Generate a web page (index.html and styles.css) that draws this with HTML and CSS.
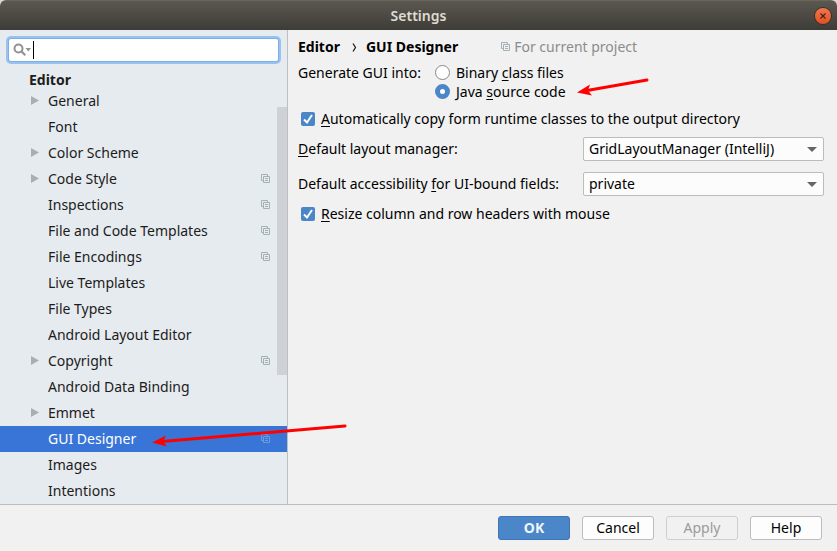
FILE: index.html
```html
<!DOCTYPE html>
<html lang="en">
<head>
<meta charset="utf-8">
<title>Settings</title>
<link rel="stylesheet" href="styles.css">
</head>
<body>
<svg class="defs" aria-hidden="true">
  <symbol id="copy" viewBox="0 0 9 10"><path d="M2 6.500H.5V.5h6V2M2.500 2.500h6v6h-6zM4 4.500h3M4 6.500h3" fill="none" stroke="currentColor"/></symbol>
  <symbol id="caret" viewBox="0 0 8 10"><path d="M0 0l8 4.500L0 9z" fill="#adadad"/></symbol>
</svg>
<div class="window">
  <header class="titlebar">
    <h1 class="title">Settings</h1>
    <button class="close" type="button" aria-label="Close"><svg viewBox="0 0 8 8"><path d="M1.500 1.500l5 5M6.500 1.500l-5 5" stroke="#4a241a" stroke-width="1.200"/></svg></button>
  </header>
  <div class="body">
    <aside class="sidebar">
      <label class="search">
        <svg class="search-icon" viewBox="0 0 18 14"><circle cx="5.500" cy="5.500" r="4" fill="none" stroke="#929292" stroke-width="2"/><path d="M8.300 8.300l4 4" stroke="#929292" stroke-width="2.200"/><path d="M12.500 5h5.500l-2.700 3.500z" fill="#929292"/></svg>
        <span class="cursor"></span>
        <input class="search-input" type="text" aria-label="Search settings">
      </label>
      <nav class="tree">
        <h2 class="group">Editor</h2>
        <ul class="items">
          <li class="item"><svg class="caret"><use href="#caret"/></svg><a class="link" href="#">General</a></li>
          <li class="item"><a class="link" href="#">Font</a></li>
          <li class="item"><svg class="caret"><use href="#caret"/></svg><a class="link" href="#">Color Scheme</a></li>
          <li class="item"><svg class="caret"><use href="#caret"/></svg><a class="link" href="#">Code Style</a><svg class="copy"><use href="#copy"/></svg></li>
          <li class="item"><a class="link" href="#">Inspections</a><svg class="copy"><use href="#copy"/></svg></li>
          <li class="item"><a class="link" href="#">File and Code Templates</a><svg class="copy"><use href="#copy"/></svg></li>
          <li class="item"><a class="link" href="#">File Encodings</a><svg class="copy"><use href="#copy"/></svg></li>
          <li class="item"><a class="link" href="#">Live Templates</a></li>
          <li class="item"><a class="link" href="#">File Types</a></li>
          <li class="item"><a class="link" href="#">Android Layout Editor</a></li>
          <li class="item"><svg class="caret"><use href="#caret"/></svg><a class="link" href="#">Copyright</a><svg class="copy"><use href="#copy"/></svg></li>
          <li class="item"><a class="link" href="#">Android Data Binding</a></li>
          <li class="item"><svg class="caret"><use href="#caret"/></svg><a class="link" href="#">Emmet</a></li>
          <li class="item selected"><a class="link" href="#">GUI Designer</a><svg class="copy"><use href="#copy"/></svg></li>
          <li class="item"><a class="link" href="#">Images</a></li>
          <li class="item"><a class="link" href="#">Intentions</a></li>
        </ul>
        <div class="scroll-thumb"></div>
      </nav>
    </aside>
    <main class="content">
      <div class="crumbs">
        <span>Editor</span><svg class="chevron" viewBox="0 0 5 9"><path d="M1 .5l2.500 4L1 8.500" fill="none" stroke="#222" stroke-width="1.300"/></svg><span>GUI Designer</span>
        <span class="scope"><svg class="copy"><use href="#copy"/></svg>For current project</span>
      </div>
      <div class="generate" role="radiogroup" aria-labelledby="generate-label">
        <span id="generate-label">Generate GUI into:</span>
        <div class="radios">
          <label class="choice"><input class="radio" type="radio" name="target"><span>Binary <u>c</u>lass files</span></label>
          <label class="choice"><input class="radio" type="radio" name="target" checked><span>Java <u>s</u>ource code</span></label>
        </div>
      </div>
      <label class="check-row"><span class="box"><input class="check" type="checkbox" checked><svg class="tick" viewBox="0 0 14 14"><path d="M3 7.500l3 3 5-7.500" fill="none" stroke="#fff" stroke-width="2"/></svg></span><span><u>A</u>utomatically copy form runtime classes to the output directory</span></label>
      <div class="fields">
        <label for="layout"><u>D</u>efault layout manager:</label>
        <div class="combo"><select class="select" id="layout"><option>GridLayoutManager (IntelliJ)</option></select></div>
        <label for="access">Default accessibility <u>f</u>or UI-bound fields:</label>
        <div class="combo"><select class="select" id="access"><option>private</option></select></div>
      </div>
      <label class="check-row"><span class="box"><input class="check" type="checkbox" checked><svg class="tick" viewBox="0 0 14 14"><path d="M3 7.500l3 3 5-7.500" fill="none" stroke="#fff" stroke-width="2"/></svg></span><span><u>R</u>esize column and row headers with mouse</span></label>
    </main>
  </div>
  <footer class="footer">
    <button class="btn primary" type="button">OK</button>
    <button class="btn" type="button">Cancel</button>
    <button class="btn" type="button" disabled>Apply</button>
    <button class="btn" type="button">Help</button>
  </footer>
  <svg class="arrow arrow-tree" viewBox="0 0 196 24" aria-hidden="true"><path d="M193 3L10 18.500" stroke="#f00" stroke-width="3" stroke-linecap="round"/><path d="M0 19.500L14 12.500 11 18.500 15 23.500z" fill="#f00"/></svg>
  <svg class="arrow arrow-radio" viewBox="0 0 74 20" aria-hidden="true"><path d="M70 3L10 13.500" stroke="#f00" stroke-width="3" stroke-linecap="round"/><path d="M0 15.500L13 7.500 11 13.500 15 18.500z" fill="#f00"/></svg>
</div>
</body>
</html>
```
FILE: styles.css
```css
* { box-sizing: border-box; }

body {
  margin: 0;
  background: #d8d8d8;
  color: #000;
  font: 14px/20px "Noto Sans", "Open Sans", sans-serif;
}

button, input, select { font: inherit; }
svg { flex: none; }
.defs { position: absolute; width: 0; height: 0; }

.window {
  position: relative;
  display: flex;
  flex-direction: column;
  min-height: 100vh;
  background: #f1f1f1;
  border-radius: 6px 6px 0 0;
  overflow: hidden;
}

.titlebar {
  display: grid;
  grid-template-columns: 1fr auto 1fr;
  align-items: center;
  height: 30px;
  padding: 0 6px;
  background: linear-gradient(#5b5850, #3e3c37);
  border-top: 1px solid #69665d;
}
.title {
  grid-column: 2;
  margin: 0;
  color: #dfdbd2;
  font-size: 14px;
  font-weight: 600;
}
.close {
  justify-self: end;
  display: grid;
  place-items: center;
  width: 16px;
  height: 16px;
  padding: 0;
  border: 0;
  border-radius: 50%;
  background: linear-gradient(#f2764f, #e2501f);
  box-shadow: 0 0 0 1px #33312c;
}
.close svg { width: 8px; height: 8px; }

.body { display: flex; flex: 1; }

.sidebar {
  display: flex;
  flex-direction: column;
  width: 288px;
  background: #e6ebef;
  border-right: 1px solid #bdbfc0;
}
.search {
  display: flex;
  align-items: center;
  height: 22px;
  margin: 9px 9px 8px;
  padding-left: 4px;
  background: #fff;
  border-radius: 2px;
  box-shadow: 0 0 0 1px #80aee0, 0 0 0 3px #97c3f3;
}
.search-icon { width: 18px; height: 14px; }
.cursor { width: 1px; height: 18px; margin-left: 2px; background: #000; }
.search-input {
  flex: 1;
  min-width: 0;
  padding: 0 4px;
  border: 0;
  outline: 0;
  background: none;
}

.tree { position: relative; color: #1c1c1c; }
.group {
  margin: 0;
  padding: 2px 0 0 29px;
  font-size: 14px;
  line-height: 17px;
  font-weight: 700;
}
.items { margin: 0; padding: 0; list-style: none; }
.item {
  display: grid;
  grid-template-columns: 17px 1fr 9px;
  align-items: center;
  height: 26px;
  padding: 0 17px 0 31px;
}
.link { grid-column: 2; color: inherit; text-decoration: none; }
.caret { grid-column: 1; grid-row: 1; width: 8px; height: 10px; }
.copy { width: 9px; height: 10px; color: #a5b0b6; }
.selected { background: #3875d7; color: #fff; }
.selected .copy { color: #6e9be0; }
.scroll-thumb {
  position: absolute;
  top: 38px;
  right: 0;
  width: 10px;
  height: 268px;
  background: #ced2d6;
}

.content { flex: 1; min-width: 0; padding: 7px 13px 0 10px; }
.crumbs {
  display: flex;
  align-items: center;
  font-weight: 700;
}
.chevron { width: 5px; height: 9px; margin: 0 9px 0 12px; }
.scope {
  display: flex;
  align-items: center;
  gap: 4px;
  margin-left: 43px;
  color: #8c8c8c;
  font-weight: 400;
}
.generate { display: flex; gap: 11px; margin-top: 6px; }
.generate > span { width: 126px; }
.choice { display: flex; align-items: center; gap: 6px; height: 19px; }
.radio {
  appearance: none;
  width: 15px;
  height: 15px;
  margin: 0;
  border: 1px solid #888;
  border-radius: 50%;
  background: #fff;
}
.radio:checked { border: 5px solid #4a86c8; }

.check-row { display: flex; align-items: center; gap: 6px; height: 20px; padding-left: 3px; margin-top: 8px; }
.box { display: grid; width: 14px; height: 14px; }
.check {
  appearance: none;
  grid-area: 1 / 1;
  width: 14px;
  height: 14px;
  margin: 0;
  border-radius: 2px;
  background: #4a86c8;
}
.tick { grid-area: 1 / 1; width: 14px; height: 14px; pointer-events: none; }
u { text-decoration-thickness: 1px; text-underline-offset: 2px; }

.fields {
  display: grid;
  grid-template-columns: 285px 1fr;
  row-gap: 11px;
  align-items: center;
  margin-top: 8px;
}
.combo { display: grid; align-items: center; }
.combo::after {
  content: "";
  grid-area: 1 / 1;
  justify-self: end;
  margin-right: 7px;
  border: 5px solid transparent;
  border-top-color: #666;
  border-bottom: 0;
  pointer-events: none;
}
.select {
  appearance: none;
  grid-area: 1 / 1;
  width: 100%;
  height: 24px;
  padding: 0 24px 0 5px;
  color: #000;
  background: #fcfcfc;
  border: 1px solid #bcbcbc;
  border-radius: 2px;
}

.footer {
  display: flex;
  justify-content: flex-end;
  gap: 12px;
  padding: 11px 15px;
  border-top: 1px solid #bdbdbd;
}
.btn {
  width: 72px;
  height: 24px;
  padding: 0;
  color: #000;
  background: #fdfdfd;
  border: 1px solid #bcbcbc;
  border-radius: 3px;
}
.btn:disabled { color: #9b9b9b; background: #f1f1f1; border-color: #cfcfcf; }
.primary { color: #f0f5fb; background: #4a86c8; border-color: #3d75b8; font-weight: 700; }

.arrow { position: absolute; pointer-events: none; }
.arrow-tree { left: 152px; top: 423px; width: 196px; height: 24px; }
.arrow-radio { left: 577px; top: 77px; width: 74px; height: 20px; }
```
